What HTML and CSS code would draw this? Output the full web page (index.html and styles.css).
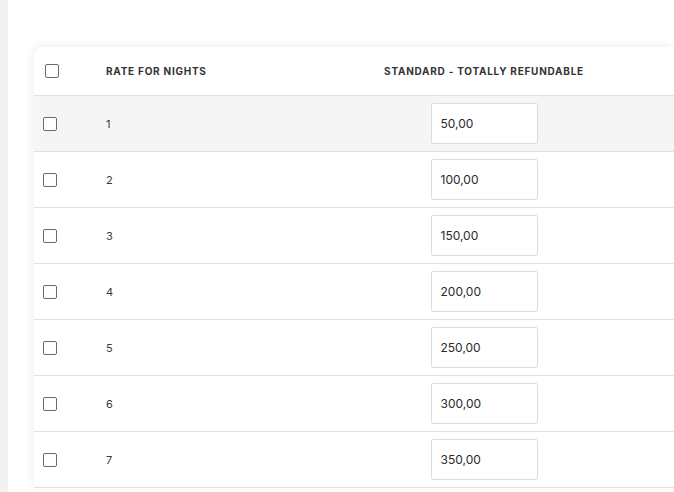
FILE: index.html
```html
<!DOCTYPE html>
<html>
<head>
<meta charset="utf-8">
<link rel="stylesheet" href="styles.css">
</head>
<body>
<div class="page">
  <aside class="strip"></aside>
  <main class="main">
    <div class="card">
      <div class="row head">
        <div class="cell chk"><span class="box"></span></div>
        <div class="cell name">Rate for nights</div>
        <div class="cell rate">Standard - Totally refundable</div>
      </div>
      <div class="row hl">
        <div class="cell chk"><span class="box"></span></div>
        <div class="cell name">1</div>
        <div class="cell rate"><div class="input">50,00</div></div>
      </div>
      <div class="row">
        <div class="cell chk"><span class="box"></span></div>
        <div class="cell name">2</div>
        <div class="cell rate"><div class="input">100,00</div></div>
      </div>
      <div class="row">
        <div class="cell chk"><span class="box"></span></div>
        <div class="cell name">3</div>
        <div class="cell rate"><div class="input">150,00</div></div>
      </div>
      <div class="row">
        <div class="cell chk"><span class="box"></span></div>
        <div class="cell name">4</div>
        <div class="cell rate"><div class="input">200,00</div></div>
      </div>
      <div class="row">
        <div class="cell chk"><span class="box"></span></div>
        <div class="cell name">5</div>
        <div class="cell rate"><div class="input">250,00</div></div>
      </div>
      <div class="row">
        <div class="cell chk"><span class="box"></span></div>
        <div class="cell name">6</div>
        <div class="cell rate"><div class="input">300,00</div></div>
      </div>
      <div class="row">
        <div class="cell chk"><span class="box"></span></div>
        <div class="cell name">7</div>
        <div class="cell rate"><div class="input">350,00</div></div>
      </div>
    </div>
  </main>
</div>
</body>
</html>
```
FILE: styles.css
```css
* { box-sizing: border-box; }
html, body { margin: 0; padding: 0; }
body {
  background: #fff;
  font-family: Inter, "Liberation Sans", sans-serif;
  color: #333;
  width: 674px;
  height: 492px;
  overflow: hidden;
}
.page {
  display: flex;
  height: 492px;
}
.strip {
  width: 8px;
  flex: none;
  background: #f1f1f1;
}
.main {
  flex: 1;
  min-width: 0;
  padding: 47px 0 0 26px;
  overflow: hidden;
}
.card {
  width: 640px;
  background: #fff;
  border-radius: 9px 0 0 0;
  box-shadow: -2px -2px 10px rgba(0, 0, 0, 0.06);
}
.row {
  display: grid;
  grid-template-columns: 72px 228px 300px 1fr;
  height: 56px;
  border-bottom: 1px solid #e0e0e0;
  align-items: center;
}
.row.head {
  height: 49px;
}
.row.hl {
  background: #f5f5f5;
}
.cell.chk {
  padding-left: 9px;
  display: flex;
  align-items: center;
}
.head .cell.chk {
  padding-left: 11px;
}
.box {
  width: 14px;
  height: 14px;
  border: 1.5px solid #6b6b6b;
  border-radius: 2px;
  background: #fff;
}
.cell.name {
  font-size: 11px;
  color: #3a3a3a;
}
.head .cell {
  font-size: 10px;
  font-weight: 700;
  text-transform: uppercase;
  letter-spacing: 0.75px;
  color: #333;
}
.cell.rate {
  display: flex;
  justify-content: center;
}
.input {
  width: 107px;
  height: 41px;
  border: 1px solid #dcdcdc;
  border-radius: 2px;
  background: #fff;
  font-size: 12px;
  color: #2a2a2a;
  padding-left: 9px;
  display: flex;
  align-items: center;
}
```
